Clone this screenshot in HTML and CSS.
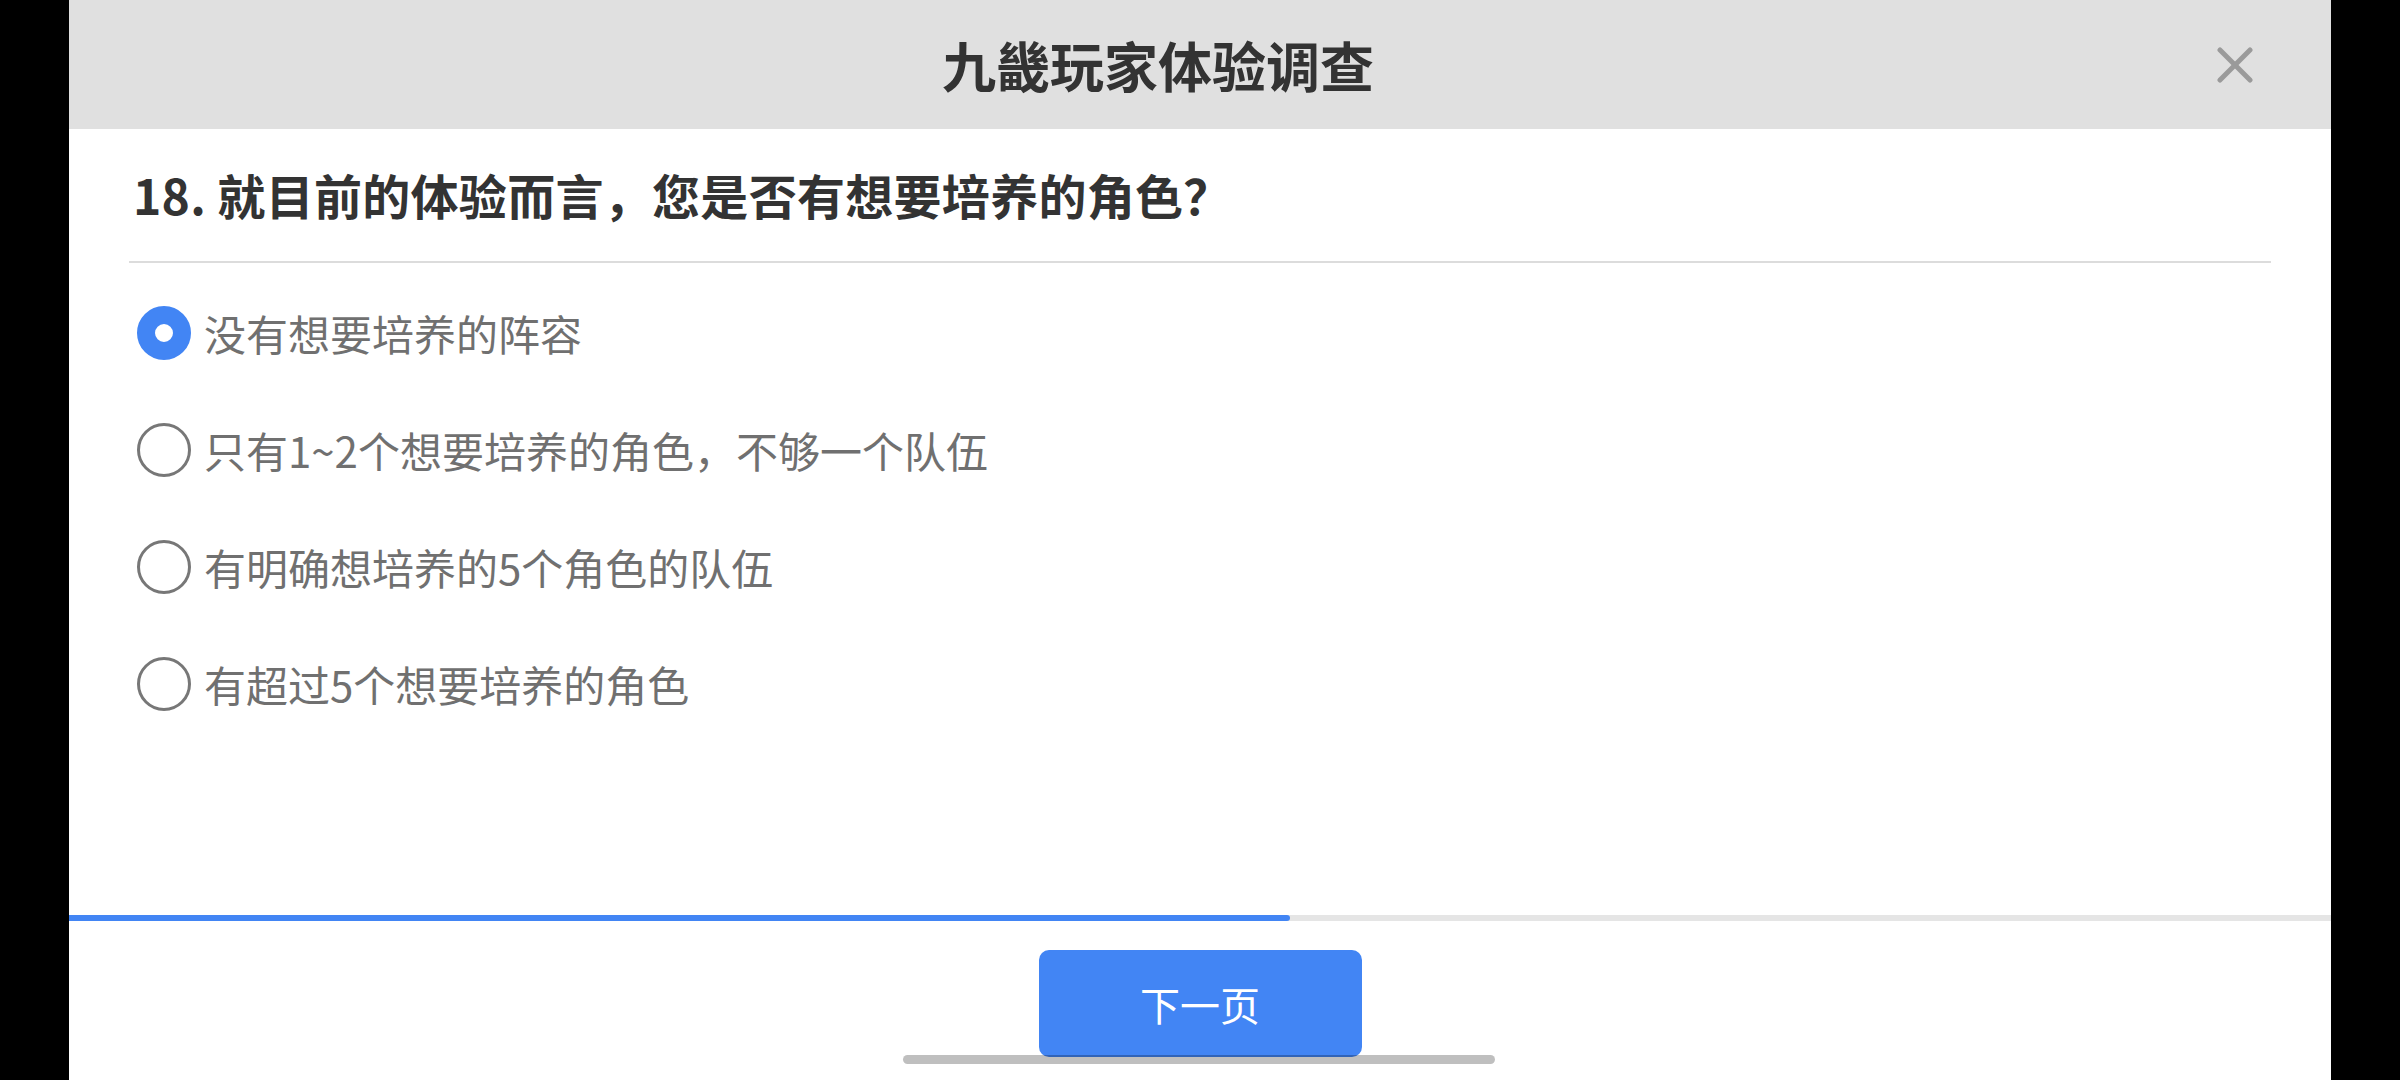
FILE: index.html
```html
<!DOCTYPE html>
<html lang="zh-CN">
<head>
    <meta charset="UTF-8">
    <meta name="viewport" content="width=device-width, initial-scale=1.0">
    <title>九畿玩家体验调查</title>
    <link rel="stylesheet" href="styles.css">
</head>
<body>

    <div class="screen">

        <!-- Top bar -->
        <header class="topbar">
            <h1 class="title">九畿玩家体验调查</h1>
            <button class="close" aria-label="关闭">
                <svg viewBox="0 0 36 36" width="36" height="36">
                    <line x1="3" y1="3" x2="33" y2="33" />
                    <line x1="33" y1="3" x2="3" y2="33" />
                </svg>
            </button>
        </header>

        <!-- Question -->
        <main class="survey">
            <h2 class="question">18. 就目前的体验而言，您是否有想要培养的角色？</h2>

            <ul class="options">
                <li class="option checked"><span class="radio"></span>没有想要培养的阵容</li>
                <li class="option"><span class="radio"></span>只有1~2个想要培养的角色，不够一个队伍</li>
                <li class="option"><span class="radio"></span>有明确想培养的5个角色的队伍</li>
                <li class="option"><span class="radio"></span>有超过5个想要培养的角色</li>
            </ul>
        </main>

        <!-- Progress -->
        <div class="progress">
            <div class="progress-fill" style="width: 54%"></div>
        </div>

        <!-- Footer -->
        <footer class="footer">
            <button class="next">下一页</button>
        </footer>

        <div class="home-bar"></div>
    </div>

</body>
</html>
```

FILE: styles.css
```css
/* General */
body {
    margin: 0;
    background-color: #000;
    font-family: "Noto Sans CJK SC", "Noto Sans", sans-serif;
}

.screen {
    position: relative;
    width: 2262px;
    height: 1080px;
    margin: 0 auto;
    background-color: #fff;
    display: flex;
    flex-direction: column;
}

/* Top bar */
.topbar {
    height: 129px;
    background-color: #e0e0e0;
    display: grid;
    grid-template-columns: 1fr auto 1fr;
    align-items: center;
}

.title {
    grid-column: 2;
    margin: 0 84px 0 0;
    font-size: 54px;
    font-weight: bold;
    line-height: 1;
    color: #333;
}

.close {
    grid-column: 3;
    justify-self: end;
    margin-right: 78px;
    padding: 0;
    border: none;
    background: none;
    width: 36px;
    height: 36px;
    cursor: pointer;
}

.close svg {
    display: block;
    stroke: #9a9a9a;
    stroke-width: 5;
    stroke-linecap: round;
}

/* Question */
.survey {
    flex: 1;
    padding: 0 60px;
}

.question {
    margin: 0;
    padding: 33px 4px 35px;
    font-size: 48px;
    line-height: 64px;
    font-weight: bold;
    letter-spacing: 0.3px;
    color: #333;
    border-bottom: 2px solid #dcdcdc;
}

/* Options */
.options {
    list-style: none;
    margin: 0;
    padding: 11px 0 0;
}

.option {
    height: 117px;
    display: flex;
    align-items: center;
    gap: 13px;
    padding-left: 8px;
    font-size: 42px;
    color: #707070;
    cursor: pointer;
}

.radio {
    box-sizing: border-box;
    width: 54px;
    height: 54px;
    flex-shrink: 0;
    border-radius: 50%;
    border: 3px solid #777;
    background-color: #fff;
}

.option.checked .radio {
    border: 18px solid #4285f4;
}

/* Progress */
.progress {
    height: 6px;
    background-color: #e5e5e5;
}

.progress-fill {
    height: 100%;
    background-color: #4285f4;
    border-radius: 0 3px 3px 0;
}

/* Footer */
.footer {
    box-sizing: border-box;
    height: 159px;
    display: flex;
    justify-content: center;
    padding-top: 29px;
}

.next {
    width: 323px;
    height: 107px;
    border: none;
    border-radius: 10px;
    background-color: #4285f4;
    color: #fff;
    font-family: inherit;
    font-size: 40px;
    cursor: pointer;
}

/* System home indicator */
.home-bar {
    position: absolute;
    left: 834px;
    bottom: 16px;
    width: 592px;
    height: 9px;
    border-radius: 5px;
    background-color: rgba(0, 0, 0, 0.25);
}
```
